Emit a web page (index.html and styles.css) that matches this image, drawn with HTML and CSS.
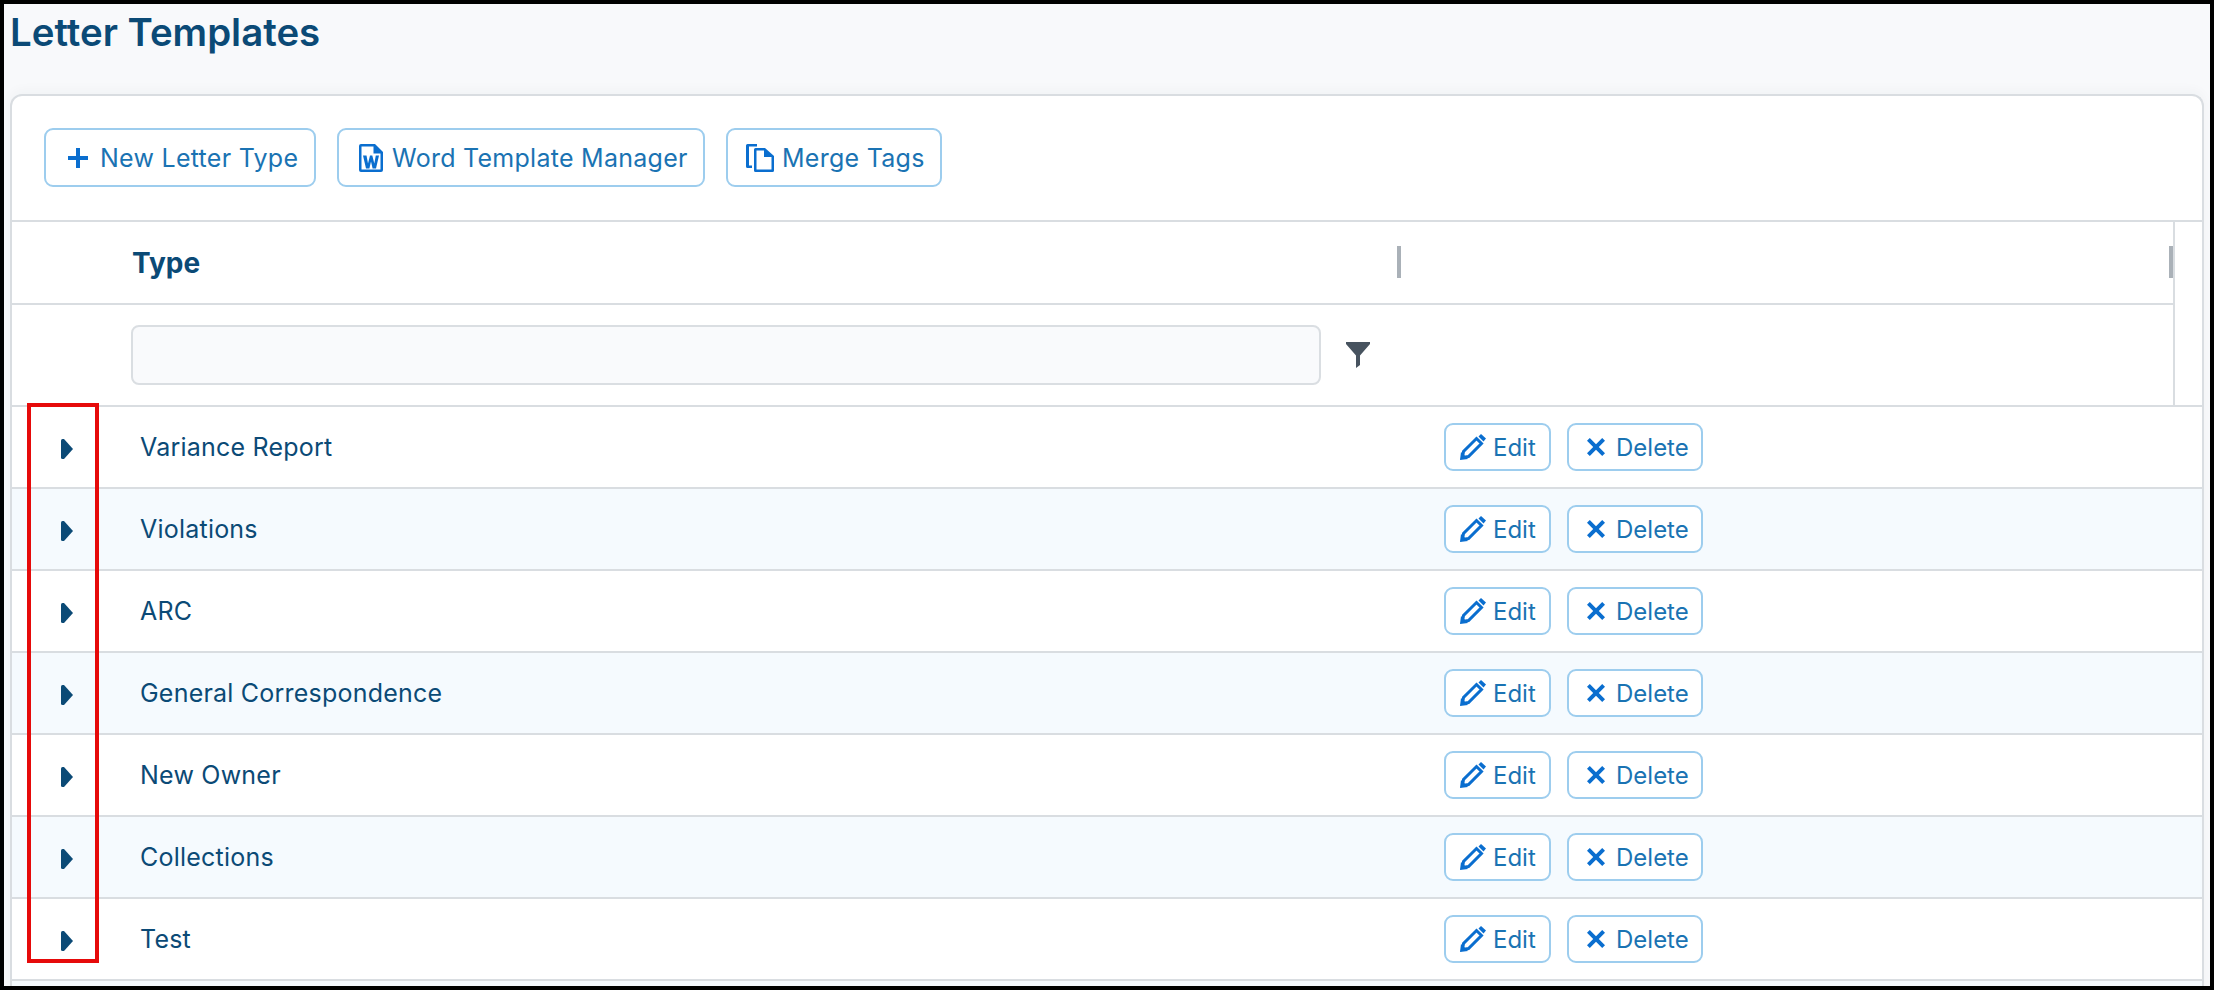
FILE: index.html
```html
<!DOCTYPE html>
<html lang="en">
<head>
<meta charset="utf-8">
<title>Letter Templates</title>
<link rel="stylesheet" href="styles.css">
</head>
<body>
<div class="frame">
  <h1 class="title">Letter Templates</h1>
  <section class="card">
    <div class="toolbar">
      <button class="btn btn-new"><svg class="ico-plus" viewBox="0 0 20 20"><path d="M8 0h4v8h8v4h-8v8H8v-8H0V8h8z"/></svg>New Letter Type</button>
      <button class="btn btn-word"><svg class="ico-word" viewBox="0 0 24 28"><path fill-rule="evenodd" d="M2 0h14l8 8v18a2 2 0 0 1-2 2H2a2 2 0 0 1-2-2V2a2 2 0 0 1 2-2zm.500 2.500v23h19V9.500H14.500v-7z"/><path d="M4 11.500h3.500l1.500 8L11 11.500h2.300l2 8 1.500-8H20l-3 13h-3.400L12 17.500 10.400 24.500H7z"/></svg>Word Template Manager</button>
      <button class="btn btn-tags"><svg class="ico-copy" viewBox="0 0 28 28"><path d="M1.500 0H11v2.500H3v19h3V24H1.500A1.500 1.500 0 0 1 0 22.500v-21A1.500 1.500 0 0 1 1.500 0z"/><path fill-rule="evenodd" d="M9.500 4H19l9 8v14.500a1.500 1.500 0 0 1-1.500 1.500h-17A1.500 1.500 0 0 1 8 26.500v-21A1.500 1.500 0 0 1 9.500 4zm1 2.500v19h15V13H18V6.500z"/></svg>Merge Tags</button>
    </div>
    <div class="table-head">
      <div class="head-main">
        <div class="head-row">
          <div class="head-type">Type<span class="handle handle-type"></span></div>
          <div class="head-actions"><span class="handle handle-actions"></span></div>
        </div>
        <div class="filter-row">
          <input class="filter-input" type="text" aria-label="Filter type">
          <svg class="ico-filter" viewBox="0 0 24 26"><path d="M0 0h24v2L14 13.500V23l-4 3V13.500L0 2z"/></svg>
        </div>
      </div>
      <div class="head-gutter"></div>
    </div>
    <div class="row"><svg class="caret" viewBox="0 0 12 20"><path d="M1.500 0H3l9 10-9 10H1.500Q0 20 0 18.500v-17Q0 0 1.500 0z"/></svg><div class="cell-name">Variance Report</div><div class="cell-actions"><button class="btn btn-sm"><svg class="ico-edit" viewBox="0 0 26 26"><path class="pencil-body" d="M2.500 23.500l1-6L16.500 4.500l5 5L8.500 22.500z"/><path d="M0 26l1-8 7 7z"/><path d="M18.500 2.500L21 0l5 4.500-2.500 3z"/></svg>Edit</button><button class="btn btn-sm btn-del"><svg class="ico-x" viewBox="0 0 18 18"><path d="M2.800 0L9 6.200 15.200 0 18 2.800 11.800 9 18 15.200 15.200 18 9 11.800 2.800 18 0 15.200 6.200 9 0 2.800z"/></svg>Delete</button></div></div>
    <div class="row alt"><svg class="caret" viewBox="0 0 12 20"><path d="M1.500 0H3l9 10-9 10H1.500Q0 20 0 18.500v-17Q0 0 1.500 0z"/></svg><div class="cell-name">Violations</div><div class="cell-actions"><button class="btn btn-sm"><svg class="ico-edit" viewBox="0 0 26 26"><path class="pencil-body" d="M2.500 23.500l1-6L16.500 4.500l5 5L8.500 22.500z"/><path d="M0 26l1-8 7 7z"/><path d="M18.500 2.500L21 0l5 4.500-2.500 3z"/></svg>Edit</button><button class="btn btn-sm btn-del"><svg class="ico-x" viewBox="0 0 18 18"><path d="M2.800 0L9 6.200 15.200 0 18 2.800 11.800 9 18 15.200 15.200 18 9 11.800 2.800 18 0 15.200 6.200 9 0 2.800z"/></svg>Delete</button></div></div>
    <div class="row"><svg class="caret" viewBox="0 0 12 20"><path d="M1.500 0H3l9 10-9 10H1.500Q0 20 0 18.500v-17Q0 0 1.500 0z"/></svg><div class="cell-name">ARC</div><div class="cell-actions"><button class="btn btn-sm"><svg class="ico-edit" viewBox="0 0 26 26"><path class="pencil-body" d="M2.500 23.500l1-6L16.500 4.500l5 5L8.500 22.500z"/><path d="M0 26l1-8 7 7z"/><path d="M18.500 2.500L21 0l5 4.500-2.500 3z"/></svg>Edit</button><button class="btn btn-sm btn-del"><svg class="ico-x" viewBox="0 0 18 18"><path d="M2.800 0L9 6.200 15.200 0 18 2.800 11.800 9 18 15.200 15.200 18 9 11.800 2.800 18 0 15.200 6.200 9 0 2.800z"/></svg>Delete</button></div></div>
    <div class="row alt"><svg class="caret" viewBox="0 0 12 20"><path d="M1.500 0H3l9 10-9 10H1.500Q0 20 0 18.500v-17Q0 0 1.500 0z"/></svg><div class="cell-name">General Correspondence</div><div class="cell-actions"><button class="btn btn-sm"><svg class="ico-edit" viewBox="0 0 26 26"><path class="pencil-body" d="M2.500 23.500l1-6L16.500 4.500l5 5L8.500 22.500z"/><path d="M0 26l1-8 7 7z"/><path d="M18.500 2.500L21 0l5 4.500-2.500 3z"/></svg>Edit</button><button class="btn btn-sm btn-del"><svg class="ico-x" viewBox="0 0 18 18"><path d="M2.800 0L9 6.200 15.200 0 18 2.800 11.800 9 18 15.200 15.200 18 9 11.800 2.800 18 0 15.200 6.200 9 0 2.800z"/></svg>Delete</button></div></div>
    <div class="row"><svg class="caret" viewBox="0 0 12 20"><path d="M1.500 0H3l9 10-9 10H1.500Q0 20 0 18.500v-17Q0 0 1.500 0z"/></svg><div class="cell-name">New Owner</div><div class="cell-actions"><button class="btn btn-sm"><svg class="ico-edit" viewBox="0 0 26 26"><path class="pencil-body" d="M2.500 23.500l1-6L16.500 4.500l5 5L8.500 22.500z"/><path d="M0 26l1-8 7 7z"/><path d="M18.500 2.500L21 0l5 4.500-2.500 3z"/></svg>Edit</button><button class="btn btn-sm btn-del"><svg class="ico-x" viewBox="0 0 18 18"><path d="M2.800 0L9 6.200 15.200 0 18 2.800 11.800 9 18 15.200 15.200 18 9 11.800 2.800 18 0 15.200 6.200 9 0 2.800z"/></svg>Delete</button></div></div>
    <div class="row alt"><svg class="caret" viewBox="0 0 12 20"><path d="M1.500 0H3l9 10-9 10H1.500Q0 20 0 18.500v-17Q0 0 1.500 0z"/></svg><div class="cell-name">Collections</div><div class="cell-actions"><button class="btn btn-sm"><svg class="ico-edit" viewBox="0 0 26 26"><path class="pencil-body" d="M2.500 23.500l1-6L16.500 4.500l5 5L8.500 22.500z"/><path d="M0 26l1-8 7 7z"/><path d="M18.500 2.500L21 0l5 4.500-2.500 3z"/></svg>Edit</button><button class="btn btn-sm btn-del"><svg class="ico-x" viewBox="0 0 18 18"><path d="M2.800 0L9 6.200 15.200 0 18 2.800 11.800 9 18 15.200 15.200 18 9 11.800 2.800 18 0 15.200 6.200 9 0 2.800z"/></svg>Delete</button></div></div>
    <div class="row"><svg class="caret" viewBox="0 0 12 20"><path d="M1.500 0H3l9 10-9 10H1.500Q0 20 0 18.500v-17Q0 0 1.500 0z"/></svg><div class="cell-name">Test</div><div class="cell-actions"><button class="btn btn-sm"><svg class="ico-edit" viewBox="0 0 26 26"><path class="pencil-body" d="M2.500 23.500l1-6L16.500 4.500l5 5L8.500 22.500z"/><path d="M0 26l1-8 7 7z"/><path d="M18.500 2.500L21 0l5 4.500-2.500 3z"/></svg>Edit</button><button class="btn btn-sm btn-del"><svg class="ico-x" viewBox="0 0 18 18"><path d="M2.800 0L9 6.200 15.200 0 18 2.800 11.800 9 18 15.200 15.200 18 9 11.800 2.800 18 0 15.200 6.200 9 0 2.800z"/></svg>Delete</button></div></div>
    <div class="row alt"></div>
  </section>
  <div class="highlight"></div>
</div>
</body>
</html>
```
FILE: styles.css
```css
* { box-sizing: border-box; }
html, body { margin: 0; padding: 0; }
body { font-family: Inter, "Liberation Sans", sans-serif; background: #000; }

.frame {
  position: relative;
  width: 2214px;
  height: 990px;
  border: 4px solid #000;
  background: #f8f9fb;
  padding: 0 6px;
  overflow: hidden;
}
.title {
  margin: 0;
  height: 90px;
  padding: 5px 0 0 0;
  font-size: 38.4px;
  line-height: 46px;
  font-weight: 600;
  color: #0b4a76;
}
.card {
  border: 2px solid #d9dde1;
  border-bottom: 0;
  border-radius: 12px 12px 0 0;
  background: #fff;
  box-shadow: 0 -4px 12px rgba(30, 50, 70, 0.03);
  height: 900px;
}
.toolbar {
  display: flex;
  gap: 21px;
  padding: 32px 32px 33px;
  height: 126px;
  border-bottom: 2px solid #d9dde1;
}
.btn {
  display: inline-flex;
  align-items: center;
  border: 2px solid #9dcdee;
  border-radius: 9px;
  background: #fff;
  color: #1a73b3;
  font-family: inherit;
  font-size: 25px;
  font-weight: 400;
  letter-spacing: 0.27px;
  white-space: nowrap;
  height: 59px;
  padding: 0;
}
.btn svg { fill: #0a6ecf; flex: none; }
.btn-new { width: 272px; padding-left: 22px; gap: 12px; }
.btn-word { width: 368px; padding-left: 20px; gap: 9px; }
.btn-tags { width: 216px; padding-left: 18px; gap: 8px; }
.ico-plus { width: 20px; height: 20px; }
.ico-word { width: 24px; height: 28px; }
.ico-copy { width: 28px; height: 28px; }

.table-head { display: flex; height: 185px; border-bottom: 2px solid #d9dde1; }
.head-main { width: 2161px; }
.head-gutter { flex: 1; border-left: 2px solid #d9dde1; }
.head-row {
  display: flex;
  height: 83px;
  border-bottom: 2px solid #d9dde1;
}
.head-type {
  position: relative;
  width: 1389px;
  padding-left: 120px;
  font-size: 28px;
  font-weight: 700;
  line-height: 83px;
  color: #0b4a76;
}
.head-actions { position: relative; flex: 1; }
.handle {
  position: absolute;
  top: 24px;
  right: 0;
  width: 4px;
  height: 32px;
  background: #aab1b8;
}
.filter-row { display: flex; align-items: center; height: 100px; padding: 0 0 0 119px; }
.filter-input {
  width: 1190px;
  height: 60px;
  border: 2px solid #dadee2;
  border-radius: 8px;
  background: #f9fafc;
  margin: 0;
}
.ico-filter { width: 24px; height: 26px; margin-left: 25px; fill: #47535f; }

.row {
  display: flex;
  align-items: center;
  height: 82px;
  border-bottom: 2px solid #d9dde1;
  padding-left: 49px;
  color: #0b4a76;
  font-size: 25px;
}
.row.alt { background: #f5fafe; }
.caret { width: 12px; height: 20px; fill: #0b4a76; flex: none; margin-top: 4px; }
.cell-name { width: 1371px; padding-left: 67px; letter-spacing: 0.22px; }
.cell-actions { display: flex; gap: 16px; }
.btn-sm { height: 48px; width: 107px; padding-left: 14px; gap: 7px; font-size: 24px; letter-spacing: 0; }
.btn-del { width: 136px; padding-left: 18px; gap: 11px; }
.ico-edit { width: 26px; height: 26px; }
.ico-x { width: 18px; height: 18px; }
.pencil-body { fill: none; stroke: #0a6ecf; stroke-width: 3; }

.highlight {
  position: absolute;
  left: 23px;
  top: 399px;
  width: 72px;
  height: 560px;
  border: 4px solid #e60a0a;
}
```
